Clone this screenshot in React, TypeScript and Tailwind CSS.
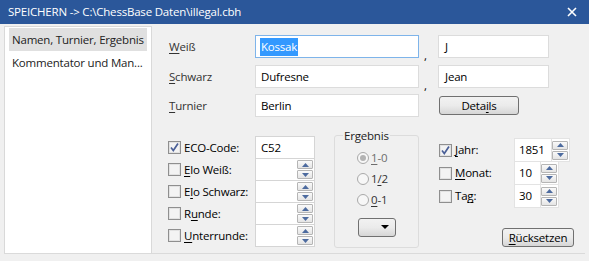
import React from 'react';

function U({ children }: { children: React.ReactNode }) {
  return <span className="underline decoration-1 underline-offset-[2px]">{children}</span>;
}

function Check({ checked }: { checked?: boolean }) {
  return (
    <span className="w-[13px] h-[13px] shrink-0 border border-[#8f8f8f] bg-[#f3f3f3] shadow-[inset_0_0_0_1px_#e2e2e2] flex items-center justify-center">
      {checked && (
        <svg width="11" height="11" viewBox="0 0 11 11">
          <path d="M2 5.5 L4.3 8.5 L9 1.5" fill="none" stroke="#4a5f97" strokeWidth="1.7" />
        </svg>
      )}
    </span>
  );
}

function SpinBtn({ up }: { up?: boolean }) {
  return (
    <span className="h-[9px] w-full border border-[#b5b5b5] rounded-[1px] bg-gradient-to-b from-[#fafafa] to-[#e4e4e4] flex items-center justify-center">
      <svg width="7" height="4" viewBox="0 0 7 4">
        {up ? <path d="M0 4 L3.5 0 L7 4 Z" fill="#4d6b9f" /> : <path d="M0 0 L3.5 4 L7 0 Z" fill="#4d6b9f" />}
      </svg>
    </span>
  );
}

function Spin() {
  return (
    <span className="w-[16px] flex flex-col gap-[1px]">
      <SpinBtn up />
      <SpinBtn />
    </span>
  );
}

function Row({ checked, label, value, first }: { checked?: boolean; label: React.ReactNode; value?: string; first?: boolean }) {
  return (
    <div className={`flex items-center ${first ? '' : '-mt-px'}`}>
      <div className="w-[87px] flex items-center gap-[3px] whitespace-nowrap">
        <Check checked={checked} />
        <span>{label}</span>
      </div>
      <div className="w-[60px] h-[23px] bg-white border border-[#d5d5d5] flex items-center justify-between pl-[5px] pr-[1px]">
        <span>{value}</span>
        {!first && <Spin />}
      </div>
    </div>
  );
}

function DateRow({ checked, label, value, wide, first }: { checked?: boolean; label: React.ReactNode; value: string; wide?: boolean; first?: boolean }) {
  return (
    <div className={`flex items-center ${first ? '' : '-mt-px'}`}>
      <div className="w-[75px] flex items-center gap-[3px] whitespace-nowrap">
        <Check checked={checked} />
        <span>{label}</span>
      </div>
      <div className={`${wide ? 'w-[38px]' : 'w-[27px]'} h-[24px] bg-white border border-[#e3e3e3] flex items-center pl-[4px]`}>
        {value}
      </div>
      <div className="h-[24px] bg-white border border-l-0 border-[#e3e3e3] flex items-center pr-[1px]">
        <Spin />
      </div>
    </div>
  );
}

function Radio({ checked, label }: { checked?: boolean; label: React.ReactNode }) {
  return (
    <div className="flex items-center gap-[2px] h-[21px]">
      <span className="w-[12px] h-[12px] rounded-full border border-[#a9a9a9] bg-[#f7f7f7] flex items-center justify-center">
        {checked && <span className="w-[6px] h-[6px] rounded-full bg-[#b3b3b3]" />}
      </span>
      <span className={checked ? 'text-[#6d6d6d]' : 'text-[#333]'}>{label}</span>
    </div>
  );
}

function Button({ children, className }: { children: React.ReactNode; className?: string }) {
  return (
    <div
      className={`h-[19px] border border-[#707070] rounded-[3px] bg-gradient-to-b from-[#f2f2f2] via-[#ebebeb] to-[#d6d6d6] flex items-center justify-center text-black ${className ?? ''}`}
    >
      {children}
    </div>
  );
}

export default function App() {
  return (
    <div className="w-[589px] h-[261px] bg-[#f0f0f0] overflow-hidden font-['Segoe_UI','Open_Sans',sans-serif] text-[11.5px] tracking-[-0.2px] leading-none text-black">
      <div className="h-[24px] bg-[#2b579a] flex items-center justify-between pl-[8px] pr-[12px] text-white">
        <span className="whitespace-nowrap">SPEICHERN -&gt; C:\ChessBase Daten\illegal.cbh</span>
        <svg width="10" height="10" viewBox="0 0 10 10">
          <path d="M1 1 L9 9 M9 1 L1 9" stroke="#fff" strokeWidth="1.6" />
        </svg>
      </div>

      <div className="mx-[4px] mt-[2px] h-[228px] border-b border-[#dadada] flex">
        <div className="w-[148px] shrink-0 h-full bg-white border border-b-0 border-[#d9d9d9] pt-px px-[4px] whitespace-nowrap overflow-hidden">
          <div className="h-[23px] bg-[#e0e0e0] flex items-center pl-[3px] text-[#222]">Namen, Turnier, Ergebnis</div>
          <div className="h-[23px] flex items-center pl-[3px] text-[#222]">Kommentator und Man...</div>
        </div>

        <div className="flex-1 pt-[9px] pl-[16px]">
          <div className="flex items-center h-[23px]">
            <span className="w-[87px] pl-px text-[#333]"><U>W</U>eiß</span>
            <div className="w-[164px] h-[23px] bg-white border border-[#7eb4ea] flex items-center pl-[4px]">
              <span className="bg-[#3399ff] text-white h-[18px] flex items-center px-px">Kossak</span>
            </div>
            <span className="w-[19px] self-end pl-[5px] -mb-[3px]">,</span>
            <div className="w-[111px] h-[23px] bg-white border border-[#dcdcdc] flex items-center pl-[6px]">J</div>
          </div>
          <div className="flex items-center h-[23px] mt-[7px]">
            <span className="w-[87px] pl-px text-[#333]"><U>S</U>chwarz</span>
            <div className="w-[164px] h-[23px] bg-white border border-[#dcdcdc] flex items-center pl-[5px]">Dufresne</div>
            <span className="w-[19px] self-end pl-[5px] -mb-[3px]">,</span>
            <div className="w-[111px] h-[23px] bg-white border border-[#dcdcdc] flex items-center pl-[6px]">Jean</div>
          </div>
          <div className="flex items-center h-[23px] mt-[6px]">
            <span className="w-[87px] pl-px text-[#333]"><U>T</U>urnier</span>
            <div className="w-[164px] h-[23px] bg-white border border-[#dcdcdc] flex items-center pl-[5px]">Berlin</div>
            <Button className="ml-[20px] w-[80px]">Deta<U>i</U>ls</Button>
          </div>

          <div className="flex mt-[19px]">
            <div className="flex flex-col">
              <Row first checked label="ECO-Code:" value="C52" />
              <Row label={<><U>E</U>lo Weiß:</>} />
              <Row label={<>E<U>l</U>o Schwarz:</>} />
              <Row label={<>R<U>u</U>nde:</>} />
              <Row label={<><U>U</U>nterrunde:</>} />
            </div>

            <fieldset className="ml-[19px] w-[85px] h-[118px] -mt-[6px] border border-[#dcdcdc] rounded-[3px] pl-[22px]">
              <legend className="ml-[-14px] px-[1px] text-[#222]">Ergebnis</legend>
              <div className="mt-[6px]">
                <Radio checked label={<><U>1</U>-0</>} />
                <Radio label={<>1<U>/</U>2</>} />
                <Radio label={<><U>0</U>-1</>} />
              </div>
              <Button className="mt-[7px] ml-[1px] w-[38px] justify-end pr-[6px]">
                <svg width="8" height="4" viewBox="0 0 8 4">
                  <path d="M0 0 L8 0 L4 4 Z" fill="#000" />
                </svg>
              </Button>
            </fieldset>

            <div className="ml-[20px] flex flex-col pt-[2px]">
              <DateRow first checked wide label={<><U>J</U>ahr:</>} value="1851" />
              <DateRow label={<><U>M</U>onat:</>} value="10" />
              <DateRow label={<>Ta<U>g</U>:</>} value="30" />
              <Button className="ml-[63px] mt-[20px] w-[72px]"><U>R</U>ücksetzen</Button>
            </div>
          </div>
        </div>
      </div>
    </div>
  );
}
